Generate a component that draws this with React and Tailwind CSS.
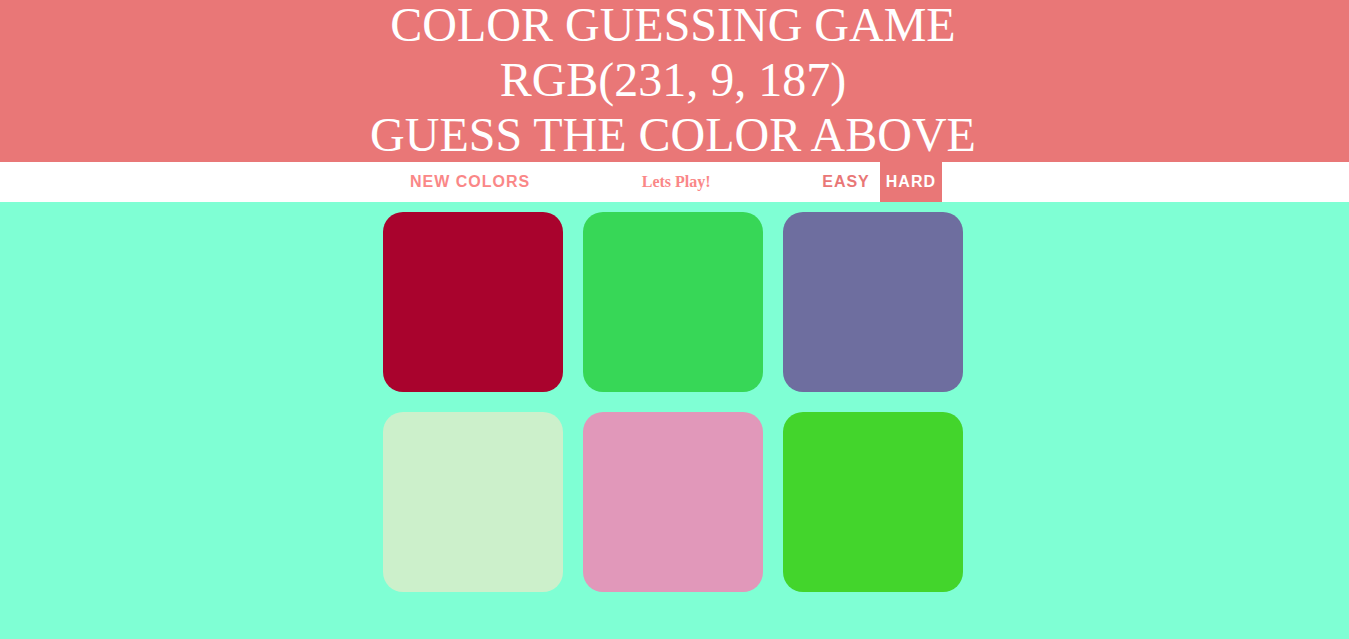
const squares = [
  { name: 'Crimson', color: 'bg-[#a9032d]' },
  { name: 'Green', color: 'bg-[#37d757]' },
  { name: 'Slate', color: 'bg-[#6e6e9f]' },
  { name: 'Pale green', color: 'bg-[#ccf0cb]' },
  { name: 'Pink', color: 'bg-[#e198ba]' },
  { name: 'Lime', color: 'bg-[#43d52c]' },
];

const control =
  "h-10 px-[6px] font-['Liberation_Sans',Arial,sans-serif] text-base font-bold tracking-[1px] uppercase";

export default function App() {
  return (
    <div className="flex min-h-screen flex-col bg-[#7fffd4] font-['Liberation_Serif','Times_New_Roman',serif]">
      <h1 className="-mt-[3px] bg-[#e97777] pr-[3px] text-center text-[48px] leading-[55px] font-normal text-white uppercase">
        <span className="block">Color Guessing Game</span>
        <span className="block">rgb(231, 9, 187)</span>
        <span className="block">Guess the color above</span>
      </h1>
      <nav className="flex h-10 items-center justify-center bg-white pr-[3px]">
        <button type="button" className={control + ' text-[#fa8787]'}>New Colors</button>
        <span className="w-[280px] text-center text-base font-bold text-[#fa8787]">Lets Play!</span>
        <button type="button" className={control + ' text-[#e97777]'}>Easy</button>
        <button type="button" className={control + ' ml-1 bg-[#e97777] text-white'}>Hard</button>
      </nav>
      <main className="pr-[3px]">
        <div className="mx-auto flex max-w-[600px] flex-wrap gap-5 p-[10px]">
          {squares.map((s) => (
            <button key={s.name} type="button" aria-label={s.name} className={'size-[180px] rounded-[20px] ' + s.color} />
          ))}
        </div>
      </main>
    </div>
  );
}
